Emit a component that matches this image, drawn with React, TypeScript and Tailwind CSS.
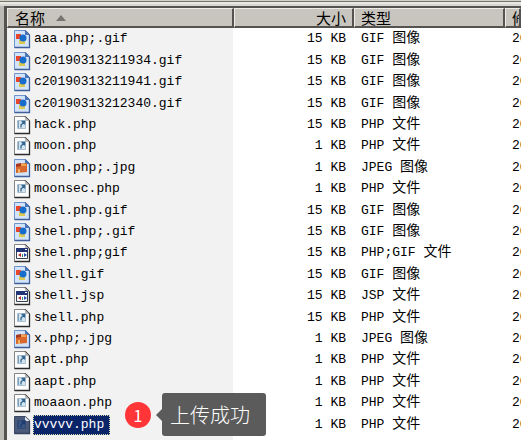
import React from "react";

type Kind = "gif" | "jpg" | "php" | "app";

interface FileRow {
  name: string;
  size: number;
  code: string;
  label: string;
  kind: Kind;
}

const files: FileRow[] = [
  { name: "aaa.php;.gif", size: 15, code: "GIF", label: "图像", kind: "gif" },
  { name: "c20190313211934.gif", size: 15, code: "GIF", label: "图像", kind: "gif" },
  { name: "c20190313211941.gif", size: 15, code: "GIF", label: "图像", kind: "gif" },
  { name: "c20190313212340.gif", size: 15, code: "GIF", label: "图像", kind: "gif" },
  { name: "hack.php", size: 15, code: "PHP", label: "文件", kind: "php" },
  { name: "moon.php", size: 1, code: "PHP", label: "文件", kind: "php" },
  { name: "moon.php;.jpg", size: 1, code: "JPEG", label: "图像", kind: "jpg" },
  { name: "moonsec.php", size: 1, code: "PHP", label: "文件", kind: "php" },
  { name: "shel.php.gif", size: 15, code: "GIF", label: "图像", kind: "gif" },
  { name: "shel.php;.gif", size: 15, code: "GIF", label: "图像", kind: "gif" },
  { name: "shel.php;gif", size: 15, code: "PHP;GIF", label: "文件", kind: "app" },
  { name: "shell.gif", size: 15, code: "GIF", label: "图像", kind: "gif" },
  { name: "shell.jsp", size: 15, code: "JSP", label: "文件", kind: "app" },
  { name: "shell.php", size: 15, code: "PHP", label: "文件", kind: "php" },
  { name: "x.php;.jpg", size: 1, code: "JPEG", label: "图像", kind: "jpg" },
  { name: "apt.php", size: 1, code: "PHP", label: "文件", kind: "php" },
  { name: "aapt.php", size: 1, code: "PHP", label: "文件", kind: "php" },
  { name: "moaaon.php", size: 1, code: "PHP", label: "文件", kind: "php" },
  { name: "vvvvv.php", size: 1, code: "PHP", label: "文件", kind: "php" },
];

function FileIcon({ kind, selected }: { kind: Kind; selected: boolean }) {
  const image = kind === "gif" || kind === "jpg";
  const paper = selected ? "#4b5a78" : image ? "#d3e3fa" : "#fcfcfc";
  const edge = selected ? "#3c4863" : image ? "#6f93cc" : "#858585";
  const dark = selected ? "#34405c" : image ? "#3f5f9a" : "#2c2c2c";
  return (
    <svg className="block h-5 w-[18px] shrink-0" viewBox="0 0 18 20" aria-hidden="true">
      <path d="M1.5 1.5H12L16.5 6V18.5H1.5Z" fill={paper} stroke={edge} />
      <path d="M12 1.5L16.5 6V18.5H1.5" fill="none" stroke={dark} strokeWidth="1.3" />
      <path d="M12 1.5L16.5 6H12Z" fill={image ? "#4a77b8" : selected ? "#e4e8ee" : "#b8b8b8"} />
      {kind === "gif" && (
        <g>
          <path d="M3 5H8V10H3Z" fill="#e8452b" />
          <path d="M6 11H12V15H6Z" fill="#dcc951" />
          <circle cx="10" cy="9" r="3.5" fill="#176ccc" />
        </g>
      )}
      {kind === "jpg" && (
        <g>
          <path d="M3 6L14 5V14L3 15Z" fill="#d9682c" />
          <path d="M3 6L8 5V8L3 9Z" fill="#a63822" />
          <path d="M8 6H13V8H8Z" fill="#f3a34e" />
          <path d="M5 11H7V15H5Z" fill="#f0b568" />
        </g>
      )}
      {kind === "php" && (
        <g>
          <path d="M4.5 5.5H12.5V13.5H4.5Z" fill={selected ? "#3b5580" : "#d5e5f0"} stroke={selected ? "#2f4a78" : "#a9bfd0"} />
          <path d="M5.5 6V13" stroke={selected ? "#2f4a78" : "#7f9fb8"} />
          <path d="M8.5 6.5H11.5V9.5M11.5 6.5L8 10V12.5" fill="none" stroke={selected ? "#1e3c72" : "#31658f"} strokeWidth="1.3" />
        </g>
      )}
      {kind === "app" && (
        <g>
          <path d="M3.5 5.5H14.5V15.5H3.5Z" fill="#ffffff" stroke="#354052" />
          <path d="M3 5H15V9H3Z" fill="#233579" />
          <path d="M12 6H14V7H12Z" fill="#ffffff" />
          <path d="M8 10V14L5 12Z" fill="#b32d2d" />
          <path d="M9 11H10V14H9Z" fill="#2e8585" />
          <path d="M11 10L14 12L11 14Z" fill="#2450b0" />
        </g>
      )}
    </svg>
  );
}

const headCell =
  "h-5 border-t border-r-2 border-b-2 border-l border-t-[#eeece6] border-r-[#55534f] border-b-[#55534f] border-l-[#eeece6] bg-[#c8c5be] p-0 font-normal whitespace-nowrap";

function UploadNote() {
  return (
    <div className="absolute -top-5 left-[118px] z-10 flex items-center font-['Noto_Sans_CJK_SC',sans-serif] text-white">
      <span className="flex size-[26px] items-center justify-center rounded-full bg-[#ff3538] text-base leading-none">
        1
      </span>
      <span className="ml-[5px] border-y-[6px] border-r-[6px] border-y-transparent border-r-[#5b5b5b]" />
      <span className="flex h-[43px] w-[104px] items-center rounded-[3px] bg-[#5b5b5b] pl-2 text-xl leading-none font-light whitespace-nowrap">
        上传成功
      </span>
    </div>
  );
}

export default function App() {
  return (
    <main className="flex min-h-screen flex-col overflow-hidden bg-white font-['Liberation_Mono','Noto_Sans_CJK_SC',monospace] text-[13px] leading-5 text-black">
      <div className="h-[6px] border-t border-b-2 border-t-[#d4d0c8] border-b-[#d8d6d0] bg-[#77756f]">
        <div className="mt-px h-[2px] bg-[#e9e7e2]" />
      </div>
      <div className="flex flex-1 border-l-4 border-[#bdbbb5]">
        <div className="flex-1 overflow-hidden border-t-2 border-l-3 border-[#55534f] bg-[linear-gradient(to_right,#f2f2f2_226px,white_226px)]">
          <table className="w-full table-fixed border-separate border-spacing-0">
            <colgroup>
              <col className="w-[227px]" />
              <col className="w-[120px]" />
              <col className="w-[151px]" />
              <col />
            </colgroup>
            <thead className="font-['Noto_Sans_CJK_SC',sans-serif] text-[15px] leading-[17px]">
              <tr>
                <th scope="col" aria-sort="ascending" className={headCell}>
                  <div className="flex items-center gap-[11px] pl-[7px]">
                    名称
                    <span className="border-x-[5px] border-b-[6px] border-x-transparent border-b-[#777570]" />
                  </div>
                </th>
                <th scope="col" className={headCell}>
                  <div className="pr-[6px] text-right">大小</div>
                </th>
                <th scope="col" className={headCell}>
                  <div className="pl-[6px] text-left">类型</div>
                </th>
                <th scope="col" className={headCell}>
                  <div className="overflow-hidden pl-[6px] text-left">修改日期</div>
                </th>
              </tr>
            </thead>
            <tbody>
              {files.map((file) => {
                const selected = file.name === "vvvvv.php";
                return (
                  <tr key={file.name} className="h-[21px] nth-[5n+2]:h-[22px] nth-[5n+4]:h-[22px]">
                    <td className="relative p-0 pt-px">
                      <div className="flex items-center pl-[6px]">
                        <FileIcon kind={file.kind} selected={selected} />
                        {selected ? (
                          <span className="ml-[2px] border border-dotted border-[#d6ddb0] bg-[#0a246a] pr-[5px] leading-[18px] text-white">
                            {file.name}
                          </span>
                        ) : (
                          <span className="pl-[3px]">{file.name}</span>
                        )}
                      </div>
                      {selected && <UploadNote />}
                    </td>
                    <td className="p-0 pt-px pr-2 text-right">{file.size} KB</td>
                    <td className="p-0 pt-px pl-[7px] whitespace-nowrap">
                      {file.code} <span className="text-sm leading-none">{file.label}</span>
                    </td>
                    <td className="overflow-hidden p-0 pt-px pl-[7px] whitespace-nowrap">2019</td>
                  </tr>
                );
              })}
            </tbody>
          </table>
        </div>
      </div>
    </main>
  );
}
